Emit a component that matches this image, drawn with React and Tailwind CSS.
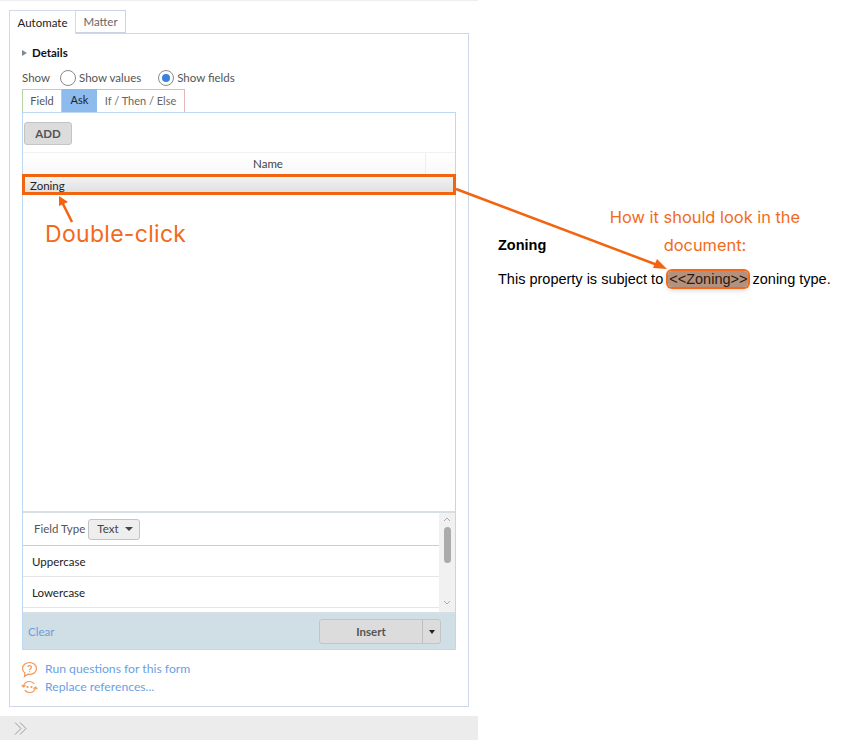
import React from 'react';

const ui = "font-['Lato','Open_Sans',sans-serif]";
const note = "font-['Inter','Lato',sans-serif] text-[#f26a1b]";

const Radio = ({ checked }) => (
    <span className="flex h-[16px] w-[16px] items-center justify-center rounded-full border border-[#8a8a8a] bg-white">
        {checked && <span className="h-[8px] w-[8px] rounded-full bg-[#3b82e0]" />}
    </span>
);

const QuestionIcon = () => (
    <svg width="17" height="17" viewBox="0 0 17 16" fill="none" stroke="#f0975a" strokeWidth="1.200">
        <path d="M8.500 1C4.600 1 1.500 3.600 1.500 7c0 1.900 1 3.500 2.500 4.600L3.400 15l3.500-2.300c.5.100 1 .2 1.600.2 3.900 0 7-2.600 7-5.900S12.400 1 8.500 1z" />
        <path d="M6.700 5.700c.2-1 1-1.500 1.900-1.500 1 0 1.800.7 1.800 1.600 0 1.400-1.800 1.400-1.800 2.900" />
        <path d="M8.600 9.800v1" />
    </svg>
);

const ReplaceIcon = () => (
    <svg width="17" height="14" viewBox="0 0 17 14" fill="none" stroke="#f0975a" strokeWidth="1.200">
        <path d="M2.500 6.500C3 3.500 5.400 1.500 8.500 1.500c2 0 3.700.9 4.800 2.300" />
        <path d="M14.500 7.500c-.5 3-2.900 5-6 5-2 0-3.700-.9-4.800-2.300" />
        <path d="M.7 5l1.800 2L4.500 5.200M12.500 8.800l2-1.800 1.800 2" />
        <circle cx="6.500" cy="7" r="1.100" fill="#f0975a" stroke="none" />
        <circle cx="10.500" cy="7" r="1.100" fill="#f0975a" stroke="none" />
    </svg>
);

const OptionRow = ({ label }) => (
    <div className="flex h-[31px] items-center border-b border-[#e6e6e6] pl-[9px] pt-[1px] text-[11.500px] text-[#222]">
        {label}
    </div>
);

const App = () => {
    return (
        <div className="relative flex h-[740px] w-[846px] overflow-hidden bg-white">
            {/* left panel */}
            <div className={`flex h-full w-[478px] flex-col border-t border-[#eeeeee] ${ui}`}>
                <div className="flex min-h-0 flex-1 flex-col px-[9px] pt-[9px]">
                    <div className="relative z-10 flex h-[24px] text-[11.500px]">
                        <div className="flex w-[67px] items-center justify-center border border-b-0 border-[#d3dbe8] bg-white text-[#222]">Automate</div>
                        <div className="flex h-[23px] w-[50px] items-center justify-center border border-l-0 border-[#c9d3e2] text-[#666]">Matter</div>
                    </div>
                    <div className="-mt-px flex min-h-0 flex-1 flex-col border border-[#cdd7e6] px-[12px]">
                        <div className="mt-[11px] flex h-[16px] items-center text-[11.500px] font-bold text-[#111]">
                            <span className="mr-[5px] h-0 w-0 border-y-[3.500px] border-l-[5px] border-y-transparent border-l-[#7d8a96]" />
                            Details
                        </div>
                        <div className="mt-[9px] flex h-[16px] items-center text-[11.500px] text-[#555]">
                            <span className="mr-[10px]">Show</span>
                            <Radio />
                            <span className="ml-[3px] mr-[17px]">Show values</span>
                            <Radio checked />
                            <span className="ml-[3px]">Show fields</span>
                        </div>
                        <div className="mt-[3px] flex h-[23px] text-[11px]">
                            <div className="flex w-[40px] items-center justify-center border border-b-0 border-[#b5d9a6] text-[#555]">Field</div>
                            <div className="flex w-[35px] items-center justify-center bg-[#8dbbee] text-[#222]">Ask</div>
                            <div className="flex w-[88px] items-center justify-center border border-b-0 border-l-0 border-[#e4b8b8] text-[#666]">If / Then / Else</div>
                        </div>
                        {/* inner box */}
                        <div className="flex min-h-0 flex-1 flex-col border border-[#bdd8f3]">
                            <div className="flex h-[39px] items-start pl-[1px] pt-[9px]">
                                <button type="button" className="flex h-[23px] w-[48px] items-center justify-center rounded-[3px] border border-[#c4c4c4] bg-[#dcdcdc] text-[11.500px] font-bold text-[#555]">ADD</button>
                            </div>
                            <div className="flex h-[25px] border-t border-[#f1f1f1] bg-gradient-to-b from-white to-[#f8f8f8] pb-[2px] text-[11.500px] text-[#444]">
                                <div className="flex flex-1 items-center justify-center border-r border-[#eeeeee] pl-[88px]">Name</div>
                                <div className="w-[29px]" />
                            </div>
                            <div className="flex h-[17px] items-center bg-gradient-to-b from-[#f2f2f2] to-[#dedede] pl-[7px] text-[11.500px] text-[#222]">Zoning</div>
                            <div className="flex-1" />
                            {/* field options */}
                            <div className="flex h-[103px] border-y-2 border-[#d7dfe3]">
                                <div className="min-w-0 flex-1">
                                    <div className="flex h-[33px] items-center border-b border-[#bcd0dd] pl-[11px] text-[11.500px] text-[#555]">
                                        <span className="mr-[3px]">Field Type</span>
                                        <div className="flex h-[21px] w-[52px] items-center justify-between rounded-[3px] border border-[#c4c4c4] bg-[#eeeeee] pl-[8px] pr-[6px] text-[#444]">
                                            Text
                                            <span className="h-0 w-0 border-x-[4px] border-t-[4px] border-x-transparent border-t-[#444]" />
                                        </div>
                                    </div>
                                    <OptionRow label="Uppercase" />
                                    <OptionRow label="Lowercase" />
                                </div>
                                <div className="flex w-[16px] flex-col items-center bg-[#f1f1f1] pt-[4px]">
                                    <svg width="8" height="5" viewBox="0 0 8 5" fill="none" stroke="#aaaaaa"><path d="M1 4l3-3 3 3" /></svg>
                                    <div className="mt-[5px] h-[36px] w-[7px] rounded-[4px] bg-[#ababab]" />
                                    <div className="flex-1" />
                                    <svg className="mb-[7px]" width="8" height="5" viewBox="0 0 8 5" fill="none" stroke="#aaaaaa"><path d="M1 1l3 3 3-3" /></svg>
                                </div>
                            </div>
                            {/* footer */}
                            <div className="flex h-[35px] items-center justify-between bg-[#d0dee5] pl-[5px] pr-[14px] text-[11.500px]">
                                <span className="text-[#6a9fdc]">Clear</span>
                                <div className="flex h-[25px] w-[122px] rounded-[3px] border border-[#c4c4c4] bg-[#dcdcdc] text-[#555]">
                                    <div className="flex flex-1 items-center justify-center border-r border-[#bdbdbd] font-bold">Insert</div>
                                    <div className="flex w-[17px] items-center justify-center">
                                        <span className="h-0 w-0 border-x-[3px] border-t-[4px] border-x-transparent border-t-[#222]" />
                                    </div>
                                </div>
                            </div>
                        </div>
                        {/* links */}
                        <div className="-ml-px mb-[10px] mt-[10px] flex flex-col text-[12.200px] text-[#6a9fe6]">
                            <div className="flex h-[18px] items-center gap-[7px]"><QuestionIcon /><span>Run questions for this form</span></div>
                            <div className="flex h-[18px] items-center gap-[7px]"><ReplaceIcon /><span>Replace references...</span></div>
                        </div>
                    </div>
                </div>
                <div className="mt-[9px] flex h-[24px] items-center bg-[#ececec] pl-[14px]">
                    <svg width="13" height="13" viewBox="0 0 13 13" fill="none" stroke="#9a9a9a" strokeWidth="1"><path d="M1 .5l6 6-6 6M6 .5l6 6-6 6" /></svg>
                </div>
            </div>

            {/* document sample */}
            <div className="flex-1 pl-[20px] pt-[237px] font-['Liberation_Sans',sans-serif] text-black">
                <div className="text-[14.500px] font-bold leading-[16px]">Zoning</div>
                <div className="mt-[16px] whitespace-nowrap text-[14.500px] leading-[20px]">
                    This property is subject to{' '}
                    <span className="ml-px rounded-[4px] bg-[#b4917c] px-px text-[#2b1a10] shadow-[0_0_0_2px_#f26a1b,0_2px_6px_rgba(0,0,0,0.25)]">&lt;&lt;Zoning&gt;&gt;</span>
                    {' '}zoning type.
                </div>
            </div>

            {/* annotations */}
            <div className="pointer-events-none absolute inset-0">
                <div className="absolute left-[22px] top-[174px] h-[21px] w-[434px] border-[3px] border-[#f2640f]" />
                <svg className="absolute inset-0" width="846" height="740" viewBox="0 0 846 740">
                    <path d="M456 189L660 266" stroke="#f2640f" strokeWidth="2.500" />
                    <path d="M667 269l-14-1 4-9z" fill="#f2640f" />
                    <path d="M72 222L62 202" stroke="#f2640f" strokeWidth="2.500" />
                    <path d="M59 196l9 6-9 4z" fill="#f2640f" />
                </svg>
                <div className={`absolute left-[45px] top-[220px] text-[23px] leading-[28px] tracking-[0.3px] ${note}`}>Double-click</div>
                <div className={`absolute left-[565px] top-[203px] w-[280px] text-center text-[16.400px] leading-[28px] ${note}`}>
                    How it should look in the<br />document:
                </div>
            </div>
        </div>
    );
};

export default App;
